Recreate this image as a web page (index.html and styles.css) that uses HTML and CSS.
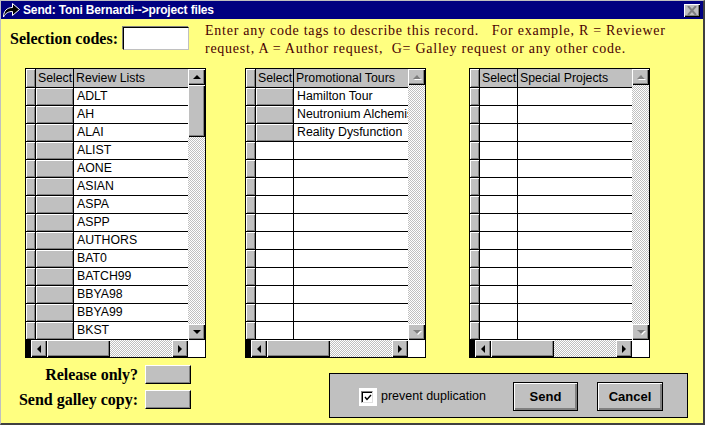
FILE: index.html
```html
<!DOCTYPE html>
<html>
<head>
<meta charset="utf-8">
<link rel="stylesheet" href="styles.css">
</head>
<body>
<div class="window">
  <div class="titlebar">
    <svg class="ticon" width="19" height="16" viewBox="0 0 19 16">
      <path d="M1.5 15 C1.5 9 5 5.5 10.5 5.5 L10.5 1.5 L17.5 7.5 L10.5 13.5 L10.5 9.5 C6.5 9.5 3.5 11 1.5 15 Z" fill="#000" stroke="#fff" stroke-width="1" stroke-linejoin="round"/>
    </svg>
    <span class="ttext">Send: Toni Bernardi--&gt;project files</span>
    <span class="tclose"><svg width="10" height="9" viewBox="0 0 10 9"><path d="M1 0 L9 9 M9 0 L1 9" stroke="#808080" stroke-width="2"/></svg></span>
  </div>

  <div class="top">
    <div class="sel">
      <span class="lbl">Selection codes:</span>
      <span class="inp"></span>
    </div>
    <p class="desc">Enter any code tags to describe this record.&nbsp;&nbsp; For example, R = Reviewer<br>request, A = Author request,&nbsp; G= Galley request or any other code.</p>
  </div>

  <div class="grids">
    <div class="tbl">
      <div class="cells">
        <div class="rh"></div><div class="hd">Select</div><div class="hd">Review Lists</div>
        <div class="rh"></div><div class="sb"></div><div class="cell">ADLT</div>
        <div class="rh"></div><div class="sb"></div><div class="cell">AH</div>
        <div class="rh"></div><div class="sb"></div><div class="cell">ALAI</div>
        <div class="rh"></div><div class="sb"></div><div class="cell">ALIST</div>
        <div class="rh"></div><div class="sb"></div><div class="cell">AONE</div>
        <div class="rh"></div><div class="sb"></div><div class="cell">ASIAN</div>
        <div class="rh"></div><div class="sb"></div><div class="cell">ASPA</div>
        <div class="rh"></div><div class="sb"></div><div class="cell">ASPP</div>
        <div class="rh"></div><div class="sb"></div><div class="cell">AUTHORS</div>
        <div class="rh"></div><div class="sb"></div><div class="cell">BAT0</div>
        <div class="rh"></div><div class="sb"></div><div class="cell">BATCH99</div>
        <div class="rh"></div><div class="sb"></div><div class="cell">BBYA98</div>
        <div class="rh"></div><div class="sb"></div><div class="cell">BBYA99</div>
        <div class="rh"></div><div class="sb"></div><div class="cell">BKST</div>
      </div>
      <div class="vscroll">
        <div class="sbtn"><i class="ar up"></i></div>
        <div class="vthumb"></div>
        <div class="track"></div>
        <div class="sbtn"><i class="ar down"></i></div>
      </div>
      <div class="hscroll">
        <div class="hpad"></div>
        <div class="sbtn"><i class="ar left"></i></div>
        <div class="hthumb"></div>
        <div class="track"></div>
        <div class="sbtn"><i class="ar right"></i></div>
      </div>
      <div class="corner"></div>
    </div>

    <div class="tbl tbl-mid">
      <div class="cells">
        <div class="rh"></div><div class="hd">Select</div><div class="hd">Promotional Tours</div>
        <div class="rh"></div><div class="sb"></div><div class="cell">Hamilton Tour</div>
        <div class="rh"></div><div class="sb"></div><div class="cell">Neutronium Alchemist</div>
        <div class="rh"></div><div class="sb"></div><div class="cell">Reality Dysfunction</div>
        <div class="rh"></div><div class="cell"></div><div class="cell"></div>
        <div class="rh"></div><div class="cell"></div><div class="cell"></div>
        <div class="rh"></div><div class="cell"></div><div class="cell"></div>
        <div class="rh"></div><div class="cell"></div><div class="cell"></div>
        <div class="rh"></div><div class="cell"></div><div class="cell"></div>
        <div class="rh"></div><div class="cell"></div><div class="cell"></div>
        <div class="rh"></div><div class="cell"></div><div class="cell"></div>
        <div class="rh"></div><div class="cell"></div><div class="cell"></div>
        <div class="rh"></div><div class="cell"></div><div class="cell"></div>
        <div class="rh"></div><div class="cell"></div><div class="cell"></div>
        <div class="rh"></div><div class="cell"></div><div class="cell"></div>
      </div>
      <div class="vscroll">
        <div class="sbtn"><i class="ar up off"></i></div>
        <div class="track"></div>
        <div class="sbtn"><i class="ar down off"></i></div>
      </div>
      <div class="hscroll">
        <div class="hpad"></div>
        <div class="sbtn"><i class="ar left"></i></div>
        <div class="hthumb"></div>
        <div class="track"></div>
        <div class="sbtn"><i class="ar right"></i></div>
      </div>
      <div class="corner"></div>
    </div>

    <div class="tbl tbl-right">
      <div class="cells">
        <div class="rh"></div><div class="hd">Select</div><div class="hd">Special Projects</div>
        <div class="rh"></div><div class="cell"></div><div class="cell"></div>
        <div class="rh"></div><div class="cell"></div><div class="cell"></div>
        <div class="rh"></div><div class="cell"></div><div class="cell"></div>
        <div class="rh"></div><div class="cell"></div><div class="cell"></div>
        <div class="rh"></div><div class="cell"></div><div class="cell"></div>
        <div class="rh"></div><div class="cell"></div><div class="cell"></div>
        <div class="rh"></div><div class="cell"></div><div class="cell"></div>
        <div class="rh"></div><div class="cell"></div><div class="cell"></div>
        <div class="rh"></div><div class="cell"></div><div class="cell"></div>
        <div class="rh"></div><div class="cell"></div><div class="cell"></div>
        <div class="rh"></div><div class="cell"></div><div class="cell"></div>
        <div class="rh"></div><div class="cell"></div><div class="cell"></div>
        <div class="rh"></div><div class="cell"></div><div class="cell"></div>
        <div class="rh"></div><div class="cell"></div><div class="cell"></div>
      </div>
      <div class="vscroll">
        <div class="sbtn"><i class="ar up off"></i></div>
        <div class="track"></div>
        <div class="sbtn"><i class="ar down off"></i></div>
      </div>
      <div class="hscroll">
        <div class="hpad"></div>
        <div class="sbtn"><i class="ar left"></i></div>
        <div class="hthumb"></div>
        <div class="track"></div>
        <div class="sbtn"><i class="ar right"></i></div>
      </div>
      <div class="corner"></div>
    </div>
  </div>

  <div class="bottom">
    <div class="opts">
      <div class="opt"><span class="olbl">Release only?</span><span class="obtn"></span></div>
      <div class="opt"><span class="olbl">Send galley copy:</span><span class="obtn"></span></div>
    </div>
    <div class="panel">
      <div class="chk-group">
        <span class="chk-bg"><span class="chk"><svg width="8" height="7" viewBox="0 0 8 7"><path d="M1 3 L3 5.5 L7 1" fill="none" stroke="#000" stroke-width="1.4"/></svg></span></span>
        <span class="chk-lbl">prevent duplication</span>
      </div>
      <span class="pbtn pbtn-send">Send</span>
      <span class="pbtn pbtn-cancel">Cancel</span>
    </div>
  </div>
</div>
</body>
</html>
```

FILE: styles.css
```css
* { box-sizing: border-box; }
html, body { margin: 0; padding: 0; }
body { width: 705px; height: 425px; overflow: hidden; background: #ffff80; }

.window {
  width: 705px; height: 425px;
  background: #ffff80;
  border-left: 1px solid #c0c0c0;
  border-top: 1px solid #c0c0c0;
  border-right: 2px solid #404040;
  border-bottom: 2px solid #404040;
  display: flex; flex-direction: column;
}

.titlebar {
  height: 18px; background: #000080;
  display: flex; align-items: center;
  padding-left: 1px; padding-right: 3px;
  flex: none;
}
.ticon { display: block; flex: none; }
.ttext {
  margin-left: 2px;
  font-family: "Liberation Sans", Arial, sans-serif;
  font-weight: bold; font-size: 12px; color: #fff;
  letter-spacing: -0.15px;
  white-space: nowrap;
}
.tclose {
  margin-left: auto;
  width: 16px; height: 13px;
  background: #c0c0c0;
  box-shadow: inset 1px 1px #fff, inset -1px -1px #000, inset -2px -2px #808080;
  display: flex; align-items: center; justify-content: center;
}
.tclose svg { display: block; }

.top {
  height: 49px; flex: none;
  display: flex; align-items: flex-start;
}
.sel {
  display: flex; align-items: center;
  margin-top: 8px; margin-left: 9px;
}
.lbl, .olbl {
  font-family: "Liberation Serif", "Times New Roman", serif;
  font-weight: bold; font-size: 16px; color: #000;
  white-space: nowrap;
}
.inp {
  margin-left: 5px;
  width: 66px; height: 23px;
  background: #fff;
  border: 1px solid; border-color: #000 #c0c0c0 #c0c0c0 #000;
  box-shadow: -1px -1px 0 #808080;
}
.desc {
  margin: 3px 0 0 16px;
  font-family: "Liberation Serif", "Times New Roman", serif;
  font-size: 14px; line-height: 18px; color: #4a0000;
  letter-spacing: 0.75px;
  white-space: nowrap;
}

.grids {
  display: flex; flex: none;
  padding-left: 24px;
  height: 290px;
}
.tbl {
  width: 181px; height: 290px;
  border: 1px solid #000;
  background: #000;
  display: grid;
  grid-template-columns: 162px 17px;
  grid-template-rows: 271px 17px;
}
.tbl-mid { margin-left: 39px; }
.tbl-right { margin-left: 43px; }

.cells {
  display: grid;
  grid-template-columns: 9px 37px 114px;
  grid-template-rows: 18px repeat(14, 17px);
  gap: 1px;
  padding-bottom: 1px;
  background: #000;
  font-family: "Liberation Sans", Arial, sans-serif;
  font-size: 12.3px; color: #000;
}
.rh {
  background: #c0c0c0;
  box-shadow: inset 1px 1px #fff, inset -1px -1px #808080;
}
.hd {
  background: #c0c0c0;
  line-height: 18px;
  padding-left: 2px;
  white-space: nowrap; overflow: hidden;
}
.sb {
  background: #c0c0c0;
  box-shadow: inset 1px 1px #fff, inset -1px -1px #808080;
}
.cell {
  background: #fff;
  line-height: 17px;
  padding-left: 3px;
  white-space: nowrap; overflow: hidden;
}

.track {
  flex: 1;
  background: repeating-conic-gradient(#c0c0c0 0 25%, #fff 0 50%) 0 0 / 2px 2px;
}
.vscroll {
  display: flex; flex-direction: column;
  background: repeating-conic-gradient(#c0c0c0 0 25%, #fff 0 50%) 0 0 / 2px 2px;
}
.hscroll {
  display: flex;
  background: #000;
}
.hpad { width: 5px; flex: none; }
.sbtn {
  flex: none;
  width: 17px; height: 16px;
  background: #c0c0c0;
  box-shadow: inset 1px 1px #fff, inset -1px -1px #000, inset -2px -2px #808080;
  display: flex; align-items: center; justify-content: center;
}
.hscroll .sbtn { width: 16px; height: 17px; }
.vthumb {
  flex: none; height: 52px;
  background: #c0c0c0;
  box-shadow: inset 1px 1px #fff, inset -1px -1px #000, inset -2px -2px #808080;
}
.hthumb {
  flex: none; width: 63px;
  background: #c0c0c0;
  box-shadow: inset 1px 1px #fff, inset -1px -1px #000, inset -2px -2px #808080;
}
.corner { background: #fff; }

.ar { display: block; width: 0; height: 0; }
.ar.up { border-left: 4px solid transparent; border-right: 4px solid transparent; border-bottom: 4px solid #000; }
.ar.down { border-left: 4px solid transparent; border-right: 4px solid transparent; border-top: 4px solid #000; }
.ar.left { border-top: 4px solid transparent; border-bottom: 4px solid transparent; border-right: 4px solid #000; }
.ar.right { border-top: 4px solid transparent; border-bottom: 4px solid transparent; border-left: 4px solid #000; }
.ar.up.off { border-bottom-color: #808080; filter: drop-shadow(1px 1px 0 #fff); }
.ar.down.off { border-top-color: #808080; filter: drop-shadow(1px 1px 0 #fff); }

.bottom {
  display: flex; align-items: flex-start;
  padding-top: 7px;
}
.opts {
  width: 190px;
  display: flex; flex-direction: column; gap: 6px;
}
.opt {
  display: flex; align-items: center; justify-content: flex-end; gap: 7px;
  height: 19px;
}
.obtn {
  width: 46px; height: 19px;
  background: #c0c0c0;
  border: 1px solid; border-color: #fff #000 #000 #fff;
  box-shadow: inset -1px -1px #808080;
}
.panel {
  margin-left: 138px; margin-top: 8px;
  width: 359px; height: 45px;
  border: 1px solid #000;
  background: #c0c0c0;
  display: flex; align-items: center;
  padding-left: 29px;
}
.chk-group {
  width: 154px; flex: none;
  display: flex; align-items: center;
}
.chk-bg {
  width: 18px; height: 18px; background: #fff;
  display: flex; align-items: center; padding-left: 2px;
  margin-top: 2px;
}
.chk {
  width: 12px; height: 12px; background: #fff;
  border: 1px solid; border-color: #808080 #dfdfdf #dfdfdf #808080;
  box-shadow: inset 1px 1px #000;
  display: flex; align-items: center; justify-content: center;
}
.chk svg { display: block; margin: 1px 0 0 1px; }
.chk-lbl {
  margin-left: 4px;
  font-family: "Liberation Sans", Arial, sans-serif;
  font-size: 12.5px; color: #000;
  white-space: nowrap;
}
.pbtn {
  flex: none; height: 29px;
  background: #c0c0c0;
  border: 1px solid #000;
  box-shadow: inset 1px 1px #fff, inset -1px -1px #808080, inset -2px -2px #808080;
  display: flex; align-items: center; justify-content: center;
  font-family: "Liberation Sans", Arial, sans-serif;
  font-weight: bold; font-size: 13px; color: #000;
  margin-top: 2px;
}
.pbtn-send { width: 65px; }
.pbtn-cancel { width: 66px; margin-left: 19px; }
```
